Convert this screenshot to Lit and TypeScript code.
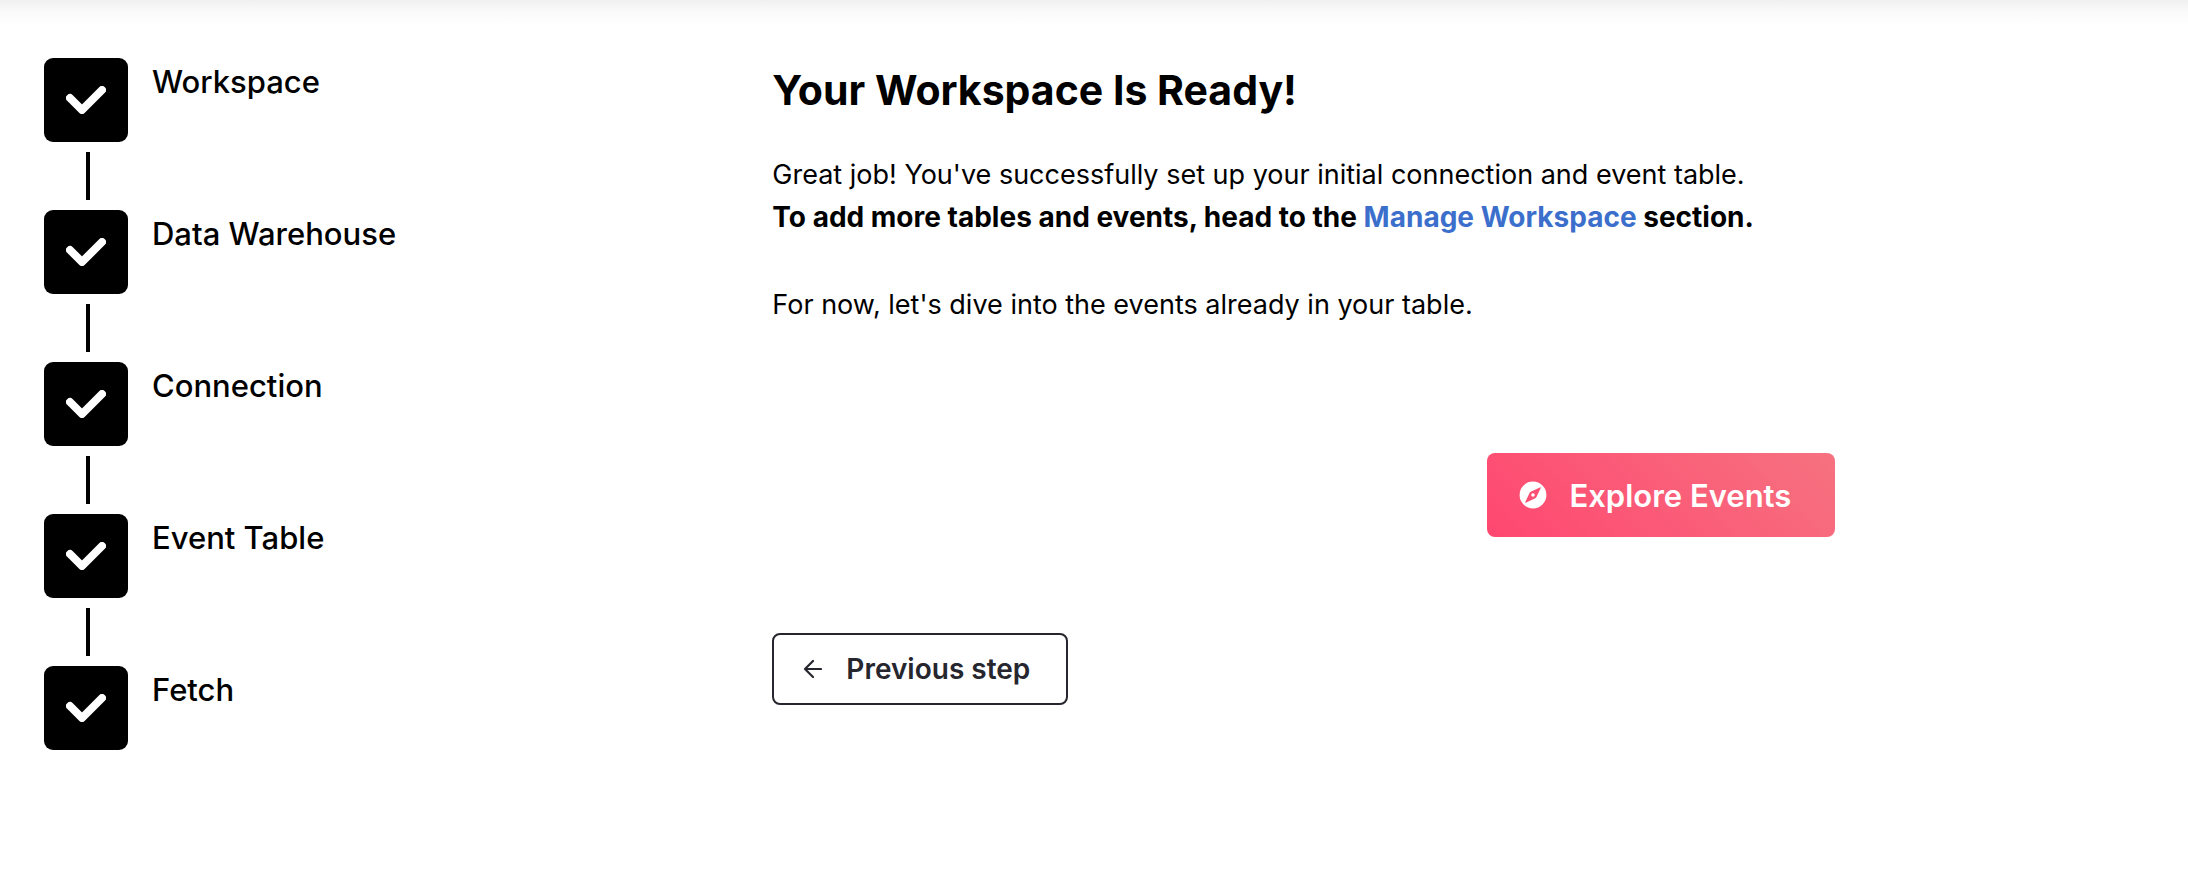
import { LitElement, html, css, svg } from "lit";
import { customElement, property } from "lit/decorators.js";

const checkIcon = svg`<path d="M4 12 L16 24 L36 4" fill="none" stroke="#fff" stroke-width="8" stroke-linecap="round" stroke-linejoin="round"/>`;

@customElement("setup-steps")
class SetupSteps extends LitElement {
  @property({ attribute: false }) steps: string[] = [];

  static styles = css`
    :host { display: block; }
    .list { list-style: none; margin: 0; padding: 0; display: grid; gap: 10px; }
    .step { display: grid; grid-template-columns: 84px 1fr; column-gap: 24px; row-gap: 10px; }
    .box {
      width: 84px; height: 84px; border-radius: 9px; background: #000;
      display: flex; align-items: center; justify-content: center;
    }
    .check { width: 40px; height: 28px; display: block; }
    .label { font-size: 31px; line-height: 48px; font-weight: 500; }
    .line { width: 4px; height: 48px; background: #000; margin-left: 42px; }
  `;

  render() {
    return html`<ol class="list">
      ${this.steps.map(
        (name, i) => html`<li class="step">
          <span class="box"><svg class="check" viewBox="0 0 40 28" aria-hidden="true">${checkIcon}</svg></span>
          <span class="label">${name}</span>
          ${i < this.steps.length - 1 ? html`<span class="line"></span>` : ""}
        </li>`
      )}
    </ol>`;
  }
}

@customElement("app-root")
class AppRoot extends LitElement {
  static styles = css`
    :host {
      display: block; background: #fff; color: #000; min-height: 100vh;
      font-family: Inter, "Liberation Sans", sans-serif;
    }
    .shade { height: 26px; background: linear-gradient(#f0f0f0, #fafafa 45%, #fff); }
    .page { display: grid; grid-template-columns: 1fr 2fr; padding: 32px 0; }
    .steps { padding-left: 44px; }
    .main { padding: 0 44px 0 43px; }
    .content { max-width: 1063px; display: flex; flex-direction: column; align-items: flex-start; }
    .title { margin: 0; font-size: 41px; line-height: 64px; font-weight: 700; }
    .text { margin: 31px 0 0; font-size: 27px; line-height: 43px; }
    .text + .text { margin-top: 44px; }
    .strong { font-size: 28px; }
    .link { color: #3c6fcc; text-decoration: none; }
    .button {
      font-family: inherit; font-weight: 600; border-radius: 8px; cursor: pointer;
      display: flex; align-items: center; margin: 0;
    }
    .primary {
      align-self: flex-end; margin-top: 127px; height: 84px; border: 0; color: #fff;
      padding: 0 44px 0 32px; gap: 22px; font-size: 31px;
      background: linear-gradient(45deg, #ff4770, #f67280);
    }
    .secondary {
      margin-top: 96px; height: 72px; border: 2px solid #26262e; color: #26262e;
      padding: 0 36px 0 28px; gap: 24px; font-size: 28px; background: #fff;
    }
    .compass { width: 28px; height: 28px; }
    .arrow { width: 20px; height: 20px; }
  `;

  render() {
    return html`
      <div class="shade"></div>
      <div class="page">
        <nav class="steps" aria-label="Setup progress">
          <setup-steps .steps=${["Workspace", "Data Warehouse", "Connection", "Event Table", "Fetch"]}></setup-steps>
        </nav>
        <main class="main">
          <div class="content">
            <h1 class="title">Your Workspace Is Ready!</h1>
            <p class="text">
              Great job! You've successfully set up your initial connection and event table.<br />
              <strong class="strong">To add more tables and events, head to the <a class="link" href="#workspace">Manage Workspace</a> section.</strong>
            </p>
            <p class="text">For now, let's dive into the events already in your table.</p>
            <button class="button primary" type="button">
              <svg class="compass" viewBox="0 0 28 28" aria-hidden="true">
                <path fill="#fff" fill-rule="evenodd" d="M14 .6a13.4 13.4 0 1 0 0 26.8a13.4 13.4 0 0 0 0-26.8ZM20.8 6.4Q22.2 5.8 21.6 7.2L17.6 15.8Q17.1 17 15.8 17.6L7.2 21.6Q5.8 22.2 6.4 20.8L10.4 12.2Q10.9 11 12.2 10.4ZM14 12.2a1.8 1.8 0 1 0 0 3.6a1.8 1.8 0 0 0 0-3.6Z"/>
              </svg>
              <span>Explore Events</span>
            </button>
            <button class="button secondary" type="button">
              <svg class="arrow" viewBox="0 0 20 20" aria-hidden="true">
                <path d="M19 10H3M11 2L3 10L11 18" fill="none" stroke="#26262e" stroke-width="2.2" stroke-linecap="round" stroke-linejoin="round"/>
              </svg>
              <span>Previous step</span>
            </button>
          </div>
        </main>
      </div>
    `;
  }
}
